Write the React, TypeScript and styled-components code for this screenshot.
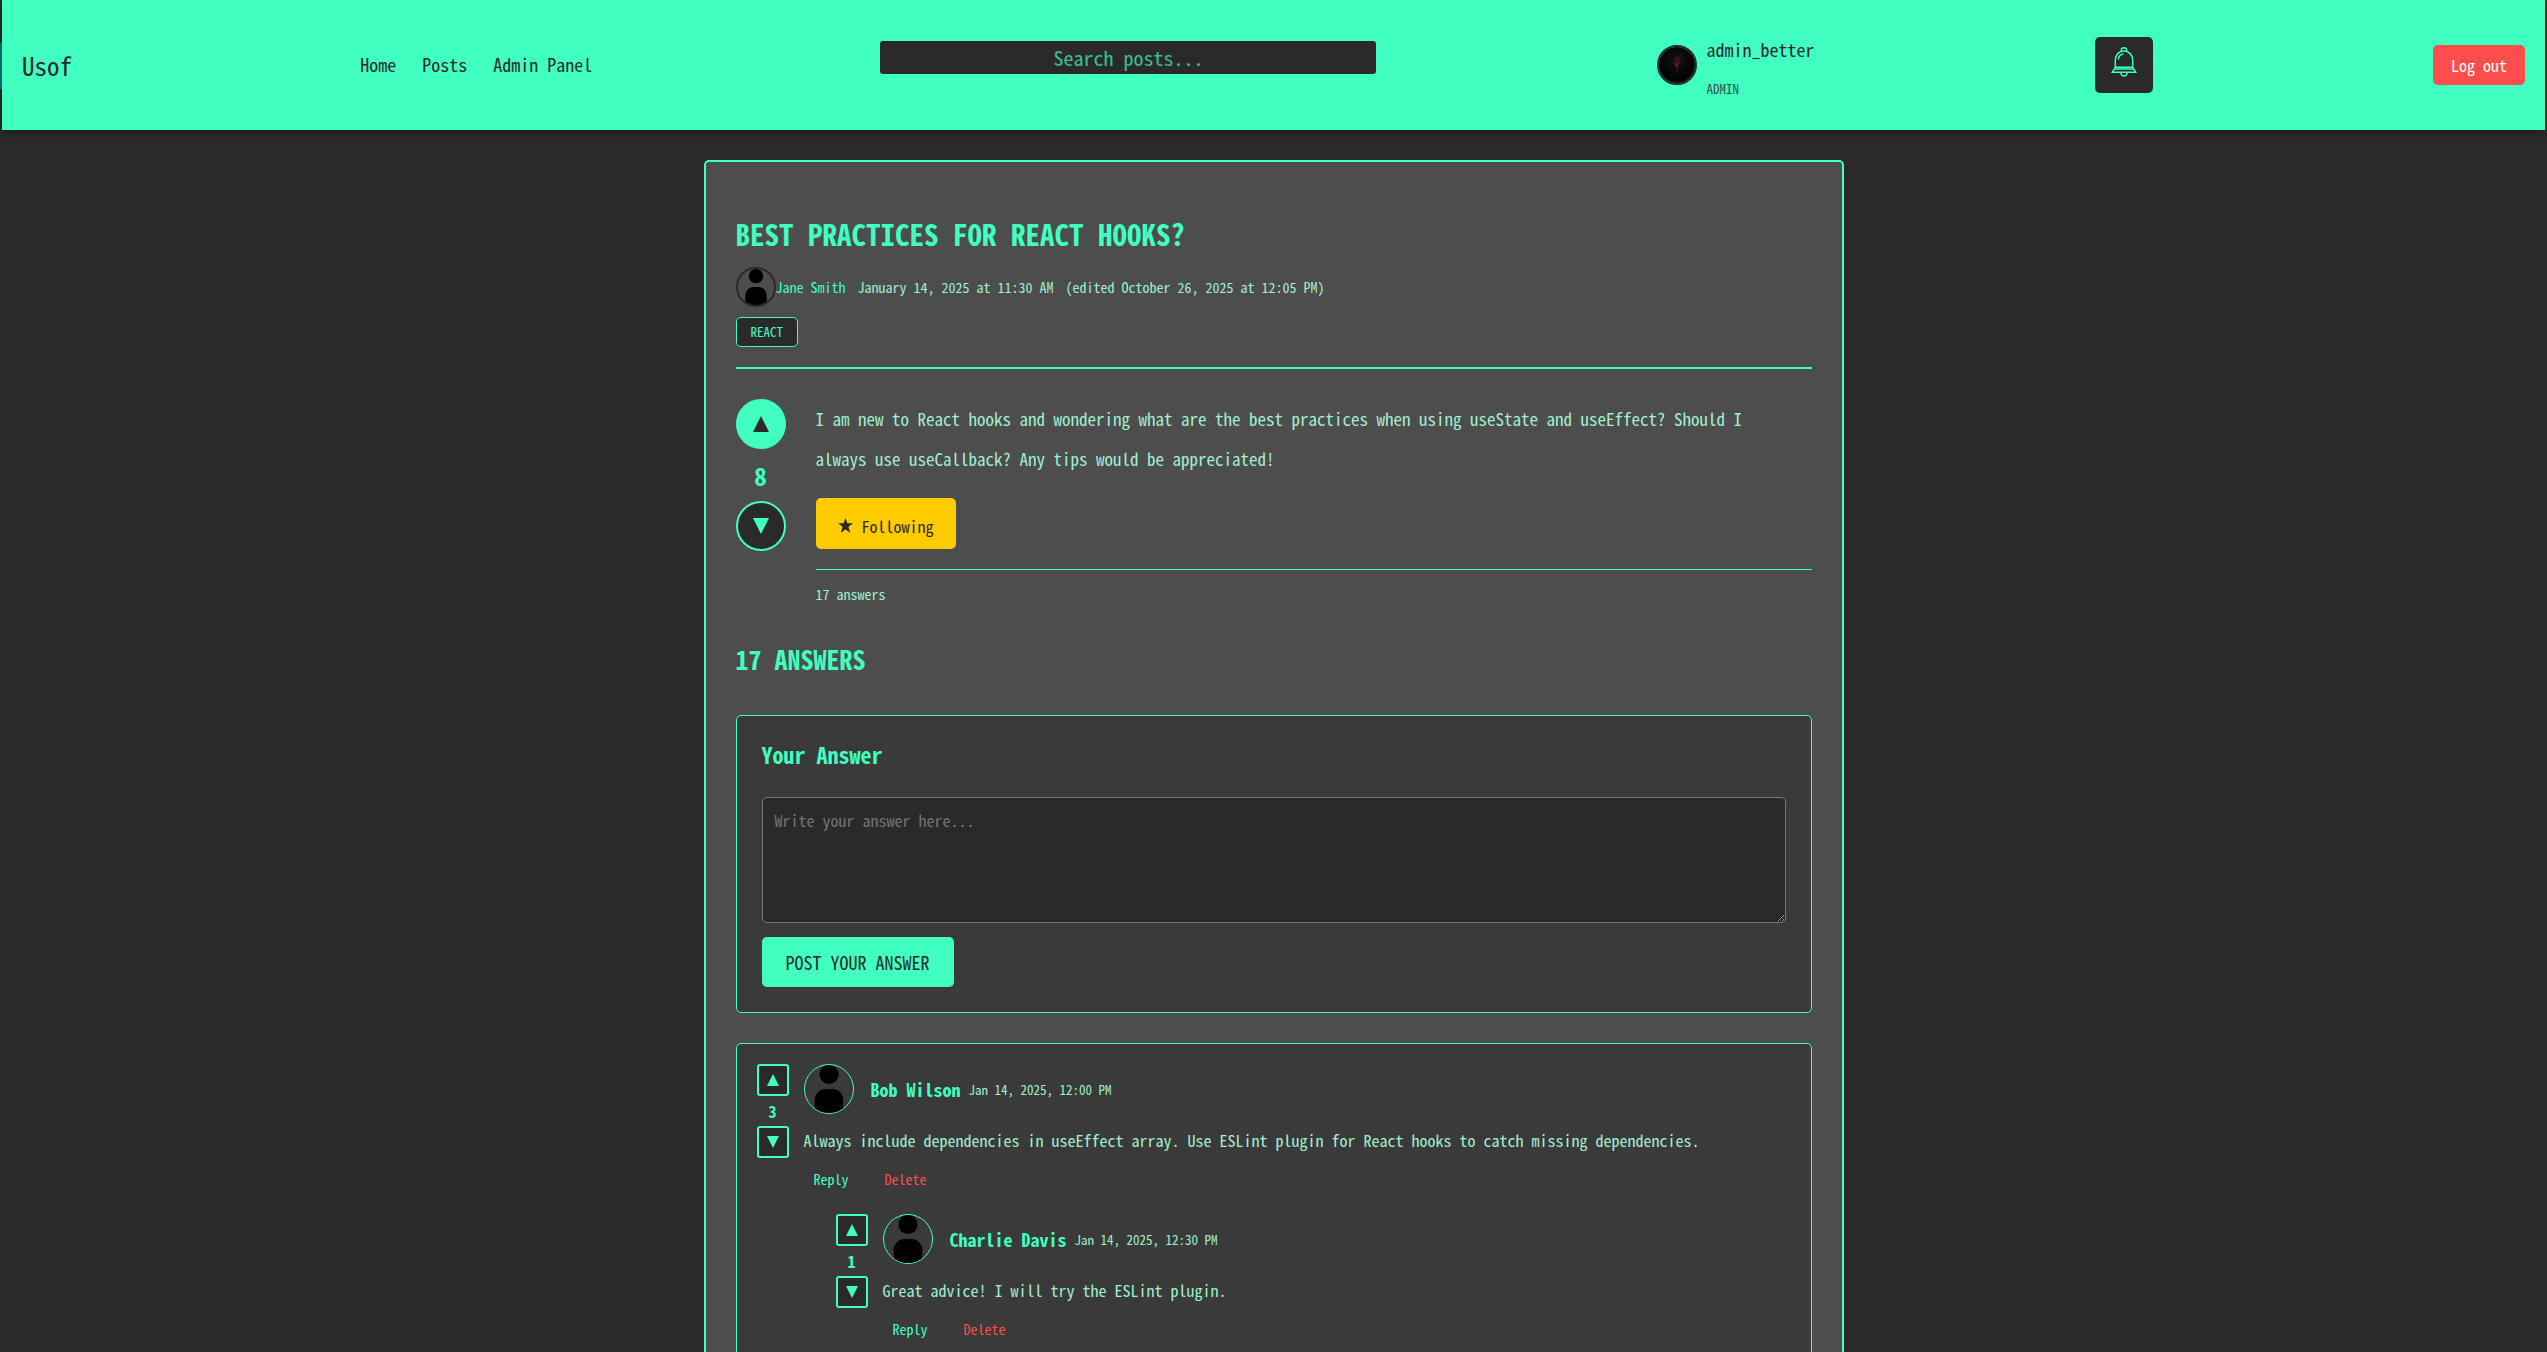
import React from "react";
import styled, { createGlobalStyle } from "styled-components";

const c = {
  mint: "#40ffc0",
  soft: "#a0f0d0",
  page: "#2a2a2a",
  panel: "#4d4d4d",
  card: "#3a3a3a",
  red: "#ff4d4d",
  gold: "#ffcc00",
};

const Global = createGlobalStyle`
  *, *::before, *::after { box-sizing: border-box; }
  body { margin: 0; background: ${c.page}; }
  body, button, input, textarea {
    font-family: "Noto Sans Mono CJK JP", "Noto Sans Mono CJK SC", "Liberation Mono", monospace;
  }
  h1, h2, h3, p { margin: 0; }
  button { cursor: pointer; }
`;

const Page = styled.div`
  height: 100vh;
  padding: 0 2px;
  overflow-y: auto;
  scrollbar-width: none;
  background: ${c.page} linear-gradient(#0a7c84, #0a7c84) 0 43px / 2px 46px no-repeat;
  color: ${c.soft};
  font-size: 16px;
`;

const Header = styled.header`
  display: flex;
  align-items: center;
  justify-content: space-between;
  padding: 20px;
  background: ${c.mint};
  color: ${c.page};
  box-shadow: 0 2px 10px rgba(0, 0, 0, 0.4);
`;

const Logo = styled.a`
  color: inherit;
  font-size: 25px;
  line-height: 40px;
  text-decoration: none;
`;

const Nav = styled.nav`
  display: flex;
  gap: 26px;
  padding: 0 8px 2px;
`;

const NavLink = styled.a`
  color: inherit;
  font-size: 18px;
  line-height: 40px;
  text-decoration: none;
`;

const Search = styled.input`
  width: 496px;
  height: 33px;
  margin: 0 0 16px;
  padding: 0 10px;
  border: 0;
  border-radius: 3px;
  background: ${c.page};
  color: ${c.mint};
  font-size: 20px;
  text-align: center;
  &::placeholder { color: ${c.mint}; opacity: 0.7; }
`;

const User = styled.div`
  display: flex;
  align-items: center;
  gap: 10px;
`;

const UserText = styled.div`
  display: flex;
  flex-direction: column;
  padding: 9px 0 1px;
`;

const UserName = styled.span`
  font-size: 18px;
  line-height: 40px;
`;

const UserRole = styled.span`
  font-size: 13px;
  line-height: 40px;
  opacity: 0.8;
`;

const Bell = styled.button`
  display: grid;
  place-items: center;
  width: 58px;
  height: 56px;
  padding: 0 0 6px;
  border: 0;
  border-radius: 5px;
  background: ${c.page};
  color: ${c.mint};
`;

const Logout = styled.button`
  height: 40px;
  padding: 0 18px;
  border: 0;
  border-radius: 5px;
  background: ${c.red};
  color: #fff;
  font-size: 16px;
`;

const Main = styled.main`
  max-width: 1140px;
  margin: 30px auto;
  padding: 30px;
  border: 2px solid ${c.mint};
  border-radius: 5px;
  background: ${c.panel};
`;

const Title = styled.h1`
  margin: 20px 0 12px;
  color: ${c.mint};
  font-size: 29px;
  line-height: 43px;
  text-transform: uppercase;
`;

const Meta = styled.div`
  display: flex;
  align-items: center;
  font-size: 14px;
  line-height: 20px;
`;

const Dates = styled.div`
  display: flex;
  gap: 12px;
  margin-left: 12px;
`;

const AuthorLink = styled.a`
  color: ${c.mint};
  text-decoration: none;
`;

const Tags = styled.div`
  display: flex;
  gap: 10px;
  padding: 10px 0 20px;
  border-bottom: 2px solid ${c.mint};
`;

const Tag = styled.a`
  padding: 0 14px;
  border: 1px solid ${c.mint};
  border-radius: 5px;
  background: ${c.page};
  color: ${c.mint};
  font-size: 13px;
  line-height: 28px;
  text-decoration: none;
`;

const Post = styled.section`
  display: flex;
  gap: 30px;
  margin: 30px 0 36px;
`;

const Votes = styled.div`
  display: flex;
  flex-direction: column;
  align-items: center;
`;

const VoteButton = styled.button<{ $round?: boolean; $active?: boolean }>`
  display: grid;
  place-items: center;
  width: ${(p) => (p.$round ? 50 : 32)}px;
  height: ${(p) => (p.$round ? 50 : 32)}px;
  padding: 0;
  border: 2px solid ${c.mint};
  border-radius: ${(p) => (p.$round ? "50%" : "3px")};
  background: ${(p) => (p.$active ? c.mint : c.page)};
  color: ${(p) => (p.$active ? c.page : c.mint)};
`;

const Count = styled.span<{ $large?: boolean }>`
  color: ${c.mint};
  font-size: ${(p) => (p.$large ? 25 : 16)}px;
  font-weight: 700;
  line-height: ${(p) => (p.$large ? 52 : 30)}px;
`;

const PostBody = styled.div`
  flex: 1;
  min-width: 0;
`;

const PostText = styled.p`
  margin-bottom: 19px;
  padding-right: 40px;
  font-size: 17px;
  line-height: 40px;
`;

const Follow = styled.button`
  display: flex;
  align-items: center;
  gap: 9px;
  height: 51px;
  padding: 4px 22px 0;
  border: 0;
  border-radius: 5px;
  background: ${c.gold};
  color: ${c.page};
  font-size: 16px;
`;

const Stats = styled.div`
  margin-top: 20px;
  padding-top: 14px;
  border-top: 1px solid ${c.mint};
  font-size: 14px;
  line-height: 20px;
`;

const Heading = styled.h2`
  margin-bottom: 37px;
  color: ${c.mint};
  font-size: 26px;
  line-height: 38px;
  text-transform: uppercase;
`;

const FormCard = styled.form`
  display: flex;
  flex-direction: column;
  align-items: flex-start;
  padding: 25px;
  border: 1px solid ${c.mint};
  border-radius: 5px;
  background: ${c.card};
`;

const FormTitle = styled.h3`
  margin-bottom: 30px;
  color: ${c.mint};
  font-size: 22px;
  font-weight: 700;
  line-height: 26px;
`;

const AnswerBox = styled.textarea`
  width: 100%;
  height: 126px;
  margin-bottom: 14px;
  padding: 12px;
  border: 1px solid #767676;
  border-radius: 5px;
  background: ${c.page};
  color: ${c.soft};
  font-size: 16px;
  line-height: 20px;
  resize: vertical;
  &::placeholder { color: #757575; }
`;

const Submit = styled.button`
  height: 50px;
  padding: 0 24px;
  border: 0;
  border-radius: 5px;
  background: ${c.mint};
  color: ${c.page};
  font-size: 18px;
  text-transform: uppercase;
`;

const AnswerCard = styled.section`
  margin-top: 30px;
  padding: 20px;
  border: 1px solid ${c.mint};
  border-radius: 5px;
  background: ${c.card};
`;

const AnswerRow = styled.article`
  display: flex;
  gap: 15px;
`;

const AnswerMain = styled.div`
  flex: 1;
  min-width: 0;
`;

const AnswerHead = styled.div`
  display: flex;
  align-items: center;
`;

const AnswerAuthor = styled.a`
  margin: 0 8px 0 17px;
  color: ${c.mint};
  font-size: 18px;
  font-weight: 700;
  text-decoration: none;
`;

const AnswerDate = styled.span`
  font-size: 13px;
`;

const AnswerText = styled.p`
  margin: 13px 0 11px;
  line-height: 26px;
`;

const Actions = styled.div`
  display: flex;
  gap: 16px;
`;

const Action = styled.button<{ $danger?: boolean }>`
  padding: 5px 10px;
  border: 0;
  background: none;
  color: ${(p) => (p.$danger ? c.red : c.mint)};
  font-size: 14px;
  line-height: 20px;
`;

const Replies = styled.div`
  margin: 20px 0 0 32px;
`;

const AvatarSvg = styled.svg<{ $size: number; $line: string; $width: number }>`
  flex: none;
  width: ${(p) => p.$size}px;
  height: ${(p) => p.$size}px;
  border: ${(p) => p.$width}px solid ${(p) => p.$line};
  border-radius: 50%;
`;

function Avatar({ small }: { small?: boolean }) {
  return (
    <AvatarSvg
      viewBox="0 0 48 48"
      $size={small ? 40 : 50}
      $line={small ? c.page : c.mint}
      $width={small ? 2 : 1}
      aria-hidden="true"
    >
      <circle cx="24" cy="9.5" r="9.6" />
      <path d="M9.7 48V35a11 11 0 0 1 11-11h6.600a11 11 0 0 1 11 11v13z" />
    </AvatarSvg>
  );
}

function AdminAvatar() {
  return (
    <AvatarSvg viewBox="0 0 36 36" $size={40} $line={c.page} $width={2} aria-hidden="true">
      <defs>
        <radialGradient id="glow" cx="50%" cy="38%" r="48%">
          <stop offset="0" stopColor="#1c1218" />
          <stop offset="0.5" stopColor="#0b0a0f" />
          <stop offset="1" stopColor="#020304" />
        </radialGradient>
      </defs>
      <rect width="36" height="36" fill="url(#glow)" />
      <path d="M15.500 10.500l2.500-1 3.500 1.500-.5 4.500-1.500 3-2-.5-2-2.500z" fill="#4a1a1e" opacity="0.6" />
      <path d="M15 15l2.500 2 2-1.500-.5 3.500-1 2.500-1.500-2.500z" fill="#8c1c24" opacity="0.7" />
      <path d="M18 21.500v4" stroke="#4a1418" strokeWidth="1" />
    </AvatarSvg>
  );
}

function Triangle({ down, size }: { down?: boolean; size: number }) {
  return (
    <svg width={size} height={size} viewBox="0 0 16 16" fill="currentColor" aria-hidden="true">
      <path d={down ? "M0 0h16L8 16z" : "M8 0l8 16H0z"} />
    </svg>
  );
}

function BellIcon() {
  return (
    <svg width="26" height="30" viewBox="0 0 26 30" fill="none" stroke="currentColor" strokeWidth="1.5" aria-hidden="true">
      <path d="M10.300 4.500V3.300a2.700 2.500 0 0 1 5.400 0v1.200" />
      <path d="M4.300 20.300V13a8.700 9 0 0 1 17.400 0v7.300l3 4.900H1.300z" />
      <path d="M4.300 20.300h17.400M3.500 22h19M7.300 12.500a6 6 0 0 1 5.200-5.500M9.800 25.300a3.200 3.700 0 0 0 6.400 0" />
    </svg>
  );
}

function StarIcon() {
  return (
    <svg width="15" height="15" viewBox="0 0 14 14" fill="currentColor" aria-hidden="true">
      <path d="M7 0l1.700 5H14l-4.300 3.200L11.400 14 7 10.500 2.600 14l1.700-5.800L0 5h5.300z" />
    </svg>
  );
}

function VoteBox({ count, post }: { count: number; post?: boolean }) {
  return (
    <Votes>
      <VoteButton type="button" $round={post} $active={post} aria-label="Upvote">
        <Triangle size={post ? 16 : 12} />
      </VoteButton>
      <Count $large={post}>{count}</Count>
      <VoteButton type="button" $round={post} aria-label="Downvote">
        <Triangle down size={post ? 16 : 12} />
      </VoteButton>
    </Votes>
  );
}

type AnswerProps = {
  author: string;
  date: string;
  text: string;
  votes: number;
  children?: React.ReactNode;
};

function Answer({ author, date, text, votes, children }: AnswerProps) {
  return (
    <AnswerRow>
      <VoteBox count={votes} />
      <AnswerMain>
        <AnswerHead>
          <Avatar />
          <AnswerAuthor href="#">{author}</AnswerAuthor>
          <AnswerDate>{date}</AnswerDate>
        </AnswerHead>
        <AnswerText>{text}</AnswerText>
        <Actions>
          <Action type="button">Reply</Action>
          <Action type="button" $danger>Delete</Action>
        </Actions>
        {children && <Replies>{children}</Replies>}
      </AnswerMain>
    </AnswerRow>
  );
}

export default function App() {
  return (
    <Page>
      <Global />
      <Header>
        <Logo href="#">Usof</Logo>
        <Nav>
          <NavLink href="#">Home</NavLink>
          <NavLink href="#">Posts</NavLink>
          <NavLink href="#">Admin Panel</NavLink>
        </Nav>
        <Search type="text" placeholder="Search posts..." aria-label="Search posts" />
        <User>
          <AdminAvatar />
          <UserText>
            <UserName>admin_better</UserName>
            <UserRole>ADMIN</UserRole>
          </UserText>
        </User>
        <Bell type="button" aria-label="Notifications">
          <BellIcon />
        </Bell>
        <Logout type="button">Log out</Logout>
      </Header>
      <Main>
        <Title>Best practices for React hooks?</Title>
        <Meta>
          <Avatar small />
          <AuthorLink href="#">Jane Smith</AuthorLink>
          <Dates>
            <span>January 14, 2025 at 11:30 AM</span>
            <span>(edited October 26, 2025 at 12:05 PM)</span>
          </Dates>
        </Meta>
        <Tags>
          <Tag href="#">REACT</Tag>
        </Tags>
        <Post>
          <VoteBox count={8} post />
          <PostBody>
            <PostText>
              I am new to React hooks and wondering what are the best practices when using useState and
              useEffect? Should I always use useCallback? Any tips would be appreciated!
            </PostText>
            <Follow type="button">
              <StarIcon />
              Following
            </Follow>
            <Stats>17 answers</Stats>
          </PostBody>
        </Post>
        <Heading>17 answers</Heading>
        <FormCard>
          <FormTitle as="label" htmlFor="answer">Your Answer</FormTitle>
          <AnswerBox id="answer" placeholder="Write your answer here..." />
          <Submit type="button">Post your answer</Submit>
        </FormCard>
        <AnswerCard>
          <Answer
            author="Bob Wilson"
            date="Jan 14, 2025, 12:00 PM"
            votes={3}
            text="Always include dependencies in useEffect array. Use ESLint plugin for React hooks to catch missing dependencies."
          >
            <Answer
              author="Charlie Davis"
              date="Jan 14, 2025, 12:30 PM"
              votes={1}
              text="Great advice! I will try the ESLint plugin."
            />
          </Answer>
        </AnswerCard>
      </Main>
    </Page>
  );
}
